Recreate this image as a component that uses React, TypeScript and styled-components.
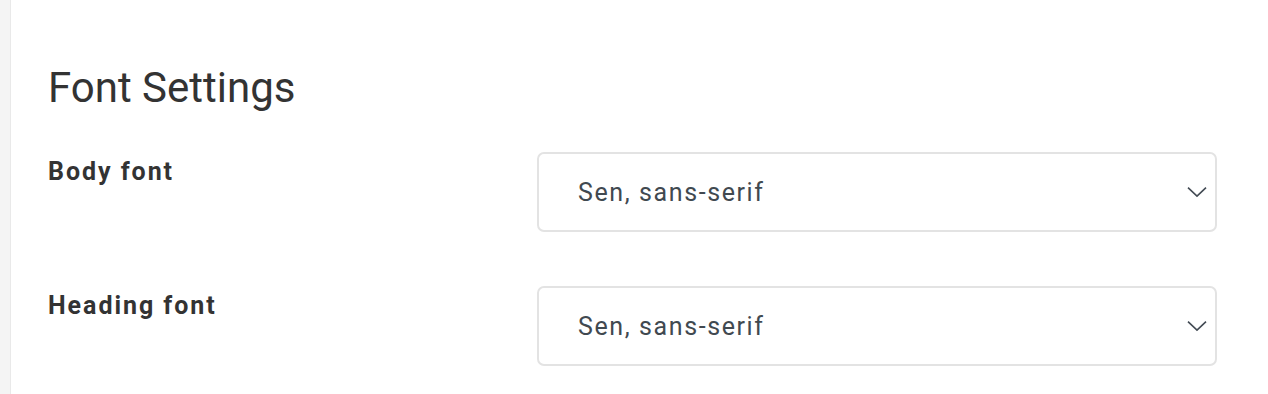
import React from "react";
import styled, { createGlobalStyle } from "styled-components";

const Global = createGlobalStyle`
  html, body { margin: 0; padding: 0; background: #ffffff; }
  body { font-family: Roboto, "Liberation Sans", sans-serif; }
`;

const Page = styled.div`
  display: flex;
  height: 394px;
  width: 1268px;
  overflow: hidden;
`;

const SideStrip = styled.div`
  width: 10px;
  flex: none;
  background: #f4f4f4;
  border-right: 1px solid #e9e9e9;
`;

const Main = styled.main`
  flex: 1;
  padding: 63px 51px 0 37px;
  display: flex;
  flex-direction: column;
  gap: 54px;
`;

const Title = styled.h2`
  margin: 0 0 -15px;
  font-size: 42px;
  line-height: 50px;
  font-weight: 400;
  color: #333333;
`;

const Row = styled.div`
  display: grid;
  grid-template-columns: 489px 680px;
  align-items: start;
`;

const Label = styled.label`
  font-size: 25px;
  line-height: 36px;
  font-weight: 700;
  letter-spacing: 1.95px;
  color: #333333;
  padding-top: 2px;
`;

const SelectBox = styled.div`
  position: relative;
  box-sizing: border-box;
  height: 80px;
  border: 2px solid #e3e3e3;
  border-radius: 7px;
  display: flex;
  align-items: center;
  padding: 0 40px 0 39px;
  font-size: 25px;
  letter-spacing: 1.6px;
  color: #414950;
  background: #fff;
`;

const Chevron = styled.svg`
  position: absolute;
  right: 8px;
  top: 50%;
  transform: translateY(-50%);
`;

const Select: React.FC<{ value: string }> = ({ value }) => (
  <SelectBox>
    {value}
    <Chevron width="20" height="11" viewBox="0 0 20 11" fill="none">
      <path d="M1 1.2 L10 9.6 L19 1.2" stroke="#444c55" strokeWidth="1.6" />
    </Chevron>
  </SelectBox>
);

export default function App() {
  return (
    <Page>
      <Global />
      <SideStrip />
      <Main>
        <Title>Font Settings</Title>
        <Row>
          <Label>Body font</Label>
          <Select value="Sen, sans-serif" />
        </Row>
        <Row>
          <Label>Heading font</Label>
          <Select value="Sen, sans-serif" />
        </Row>
      </Main>
    </Page>
  );
}
